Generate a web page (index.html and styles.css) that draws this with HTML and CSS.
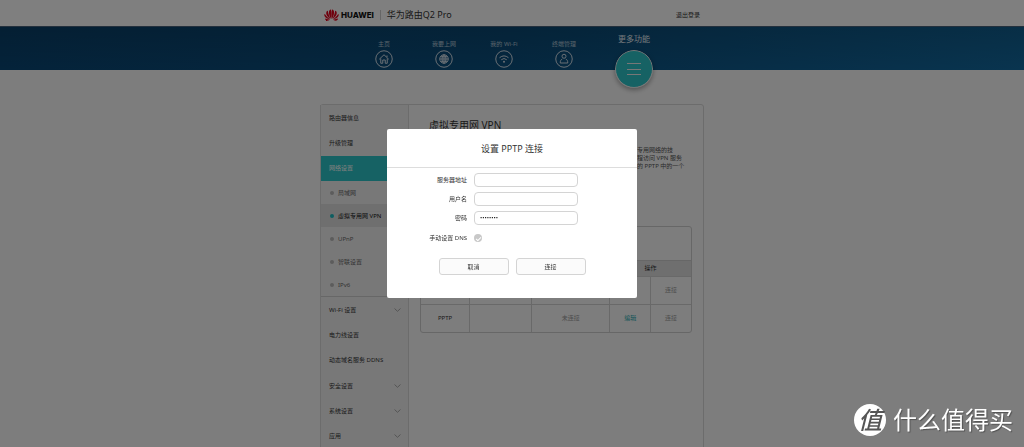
FILE: index.html
```html
<!DOCTYPE html>
<html lang="zh-CN">
<head>
<meta charset="utf-8">
<title>华为路由Q2 Pro</title>
<link rel="stylesheet" href="styles.css">
</head>
<body>
<header class="topbar">
  <div class="wrap topbar-row">
    <svg class="logo" viewBox="0 0 30 24" aria-hidden="true">
      <g fill="#e0001b">
        <path d="M14.4 20C10 14 8.500 5 11.500 2C12.500 1 13.700 .7 14 1.200C15.500 7 15 14 14.400 20Z"/>
        <path d="M15.600 20C20 14 21.500 5 18.500 2C17.500 1 16.300 .7 16 1.200C14.500 7 15 14 15.600 20Z"/>
        <path d="M13 20C5 15 3.500 9 5 5.500C5.500 4 7 3 7.600 3.500C8.500 9 10.500 15 13 20Z"/>
        <path d="M17 20C25 15 26.500 9 25 5.500C24.500 4 23 3 22.400 3.500C21.500 9 19.500 15 17 20Z"/>
        <path d="M12.300 20.700C5 19.500 1 16 .6 12.500C.5 11 1 9.800 1.600 9.800C4.500 14 8 17.500 12.300 20.700Z"/>
        <path d="M17.700 20.700C25 19.500 29 16 29.400 12.500C29.500 11 29 9.800 28.400 9.800C25.500 14 22 17.500 17.700 20.700Z"/>
        <path d="M12.300 21.700C9 24 4.500 24 2.500 21C2 20 2.300 19.200 3 19.200C6 20.500 9 21.500 12.300 21.700Z"/>
        <path d="M17.700 21.700C21 24 25.500 24 27.500 21C28 20 27.700 19.200 27 19.200C24 20.500 21 21.500 17.700 21.700Z"/>
      </g>
    </svg>
    <span class="brand">HUAWEI</span>
    <span class="product">华为路由Q2 Pro</span>
    <a class="logout" href="#">退出登录</a>
  </div>
</header>
<nav class="mainnav">
  <div class="wrap mainnav-row">
    <a class="nav-item" href="#"><span>主页</span>
      <svg class="nav-icon" viewBox="0 0 36 36"><circle cx="18" cy="18" r="16.500"/><path d="M8.500 18.500L18 9.500L27.500 18.500M11.500 17V26.500H15.500V20H20.500V26.500H24.500V17M24 11V14"/></svg></a>
    <a class="nav-item" href="#"><span>我要上网</span>
      <svg class="nav-icon" viewBox="0 0 36 36"><circle cx="18" cy="18" r="16.500"/><circle cx="18" cy="18" r="8.500"/><ellipse cx="18" cy="18" rx="4" ry="8.500"/><path d="M9.500 18H26.500M11 13.500H25M11 22.500H25M18 9.500V26.500"/></svg></a>
    <a class="nav-item" href="#"><span>我的 Wi-Fi</span>
      <svg class="nav-icon" viewBox="0 0 36 36"><circle cx="18" cy="18" r="16.500"/><path d="M9 15.500Q18 8 27 15.500M12.500 19.500Q18 14.500 23.500 19.500"/><circle class="dot" cx="18" cy="23.500" r="2"/></svg></a>
    <a class="nav-item" href="#"><span>终端管理</span>
      <svg class="nav-icon" viewBox="0 0 36 36"><circle cx="18" cy="18" r="16.500"/><circle cx="18" cy="12.500" r="4"/><path d="M14.500 18C11 20 10.500 22 10.500 26H25.500C25.500 22 25 20 21.500 18"/></svg></a>
    <a class="nav-item nav-current" href="#"><span>更多功能</span>
      <svg class="more-icon" viewBox="0 0 38 38"><circle cx="19" cy="19" r="18.500"/><path d="M12 13.500H26M12 19.500H26M12 24.500H26"/></svg></a>
  </div>
</nav>
<main class="wrap panel">
  <aside class="side">
    <div class="group group-top">
      <a class="side-item" href="#">路由器信息</a>
      <a class="side-item" href="#">升级管理</a>
      <a class="side-item side-active" href="#">网络设置</a>
    </div>
    <div class="submenu">
      <a class="sub-item" href="#">局域网</a>
      <a class="sub-item sub-active" href="#">虚拟专用网 VPN</a>
      <a class="sub-item" href="#">UPnP</a>
      <a class="sub-item" href="#">智联设置</a>
      <a class="sub-item" href="#">IPv6</a>
    </div>
    <div class="group group-bottom">
      <a class="side-item" href="#">Wi-Fi 设置<svg class="chev" viewBox="0 0 7 4"><path d="M.5 .5L3.500 3.300L6.500 .5"/></svg></a>
      <a class="side-item" href="#">电力线设置</a>
      <a class="side-item" href="#">动态域名服务 DDNS</a>
      <a class="side-item" href="#">安全设置<svg class="chev" viewBox="0 0 7 4"><path d="M.5 .5L3.500 3.300L6.500 .5"/></svg></a>
      <a class="side-item" href="#">系统设置<svg class="chev" viewBox="0 0 7 4"><path d="M.5 .5L3.500 3.300L6.500 .5"/></svg></a>
      <a class="side-item" href="#">应用<svg class="chev" viewBox="0 0 7 4"><path d="M.5 .5L3.500 3.300L6.500 .5"/></svg></a>
    </div>
  </aside>
  <section class="content">
    <h1 class="page-title">虚拟专用网 VPN</h1>
    <p class="intro">专用网络的技<br>程访问 VPN 服务<br>的 PPTP 中的一个</p>
    <div class="table-box">
      <div class="table-top"></div>
      <table class="vpn-table">
        <colgroup><col class="c-type"><col class="c-server"><col class="c-state"><col class="c-act"><col class="c-act"></colgroup>
        <thead><tr><th></th><th></th><th></th><th colspan="2">操作</th></tr></thead>
        <tbody>
          <tr><td></td><td></td><td></td><td></td><td>连接</td></tr>
          <tr><td class="type">PPTP</td><td></td><td>未连接</td><td><a class="edit" href="#">编辑</a></td><td>连接</td></tr>
        </tbody>
      </table>
    </div>
  </section>
</main>
<div class="overlay">
  <form class="dialog" role="dialog" aria-labelledby="dlg-title">
    <h2 class="dialog-title" id="dlg-title">设置 PPTP 连接</h2>
    <div class="fields">
      <label for="server">服务器地址</label><input class="field" id="server" type="text">
      <label for="user">用户名</label><input class="field" id="user" type="text">
      <label for="pass">密码</label><input class="field" id="pass" type="password" value="12345678">
      <label for="dns">手动设置 DNS</label><input class="check" id="dns" type="checkbox">
    </div>
    <div class="actions">
      <button class="btn" type="button">取消</button>
      <button class="btn" type="button">连接</button>
    </div>
  </form>
</div>
<div class="watermark"><span class="mark">值</span><span>什么值得买</span></div>
</body>
</html>
```

FILE: styles.css
```css
* { box-sizing: border-box; }
body {
  margin: 0;
  height: 100vh;
  overflow: hidden;
  background: #fbfbfb;
  color: #333;
  font: 6px/8px "Noto Sans", "Noto Sans CJK SC", sans-serif;
}
a { color: inherit; text-decoration: none; }
.wrap { width: 100%; max-width: 384px; margin: 0 auto; }

.topbar { background: #fff; }
.topbar-row { display: flex; align-items: center; height: 26px; padding: 4px 4px 0; }
.logo { width: 15px; height: 12px; margin-right: 2px; }
.brand { font-family: Inter, sans-serif; font-size: 8px; font-weight: 800; line-height: 10px; color: #111; }
.product {
  margin-left: 6px;
  padding-left: 6px;
  border-left: 1px solid #ccc;
  font-size: 9px;
  line-height: 10px;
}
.logout { margin-left: auto; }

.mainnav {
  height: 44px;
  border-top: 1px solid #47617a;
  background: linear-gradient(rgba(0, 0, 0, .12), transparent), linear-gradient(90deg, #094674, #0b5080 50%, #12699f);
}
.mainnav-row { display: flex; align-items: flex-start; padding-left: 34px; }
.nav-item {
  display: flex;
  flex-direction: column;
  align-items: center;
  gap: 2px;
  width: 60px;
  padding-top: 13px;
  color: #b0c4d4;
}
.nav-icon { width: 18px; height: 18px; fill: none; stroke: #d2dee8; stroke-width: 2; }
.nav-icon .dot { fill: #d2dee8; stroke: none; }
.nav-current { width: 80px; gap: 7px; padding-top: 8px; color: #e4edf4; font-size: 8px; }
.more-icon {
  width: 38px;
  height: 38px;
  border-radius: 50%;
  fill: #2cc5c8;
  stroke: #eee;
  stroke-width: 1;
  box-shadow: 0 2px 5px rgba(0, 0, 0, .35);
}

.panel {
  display: flex;
  margin-top: 34px;
  border: 1px solid #d8d8d8;
  border-radius: 3px 3px 0 0;
}
.side { flex: 0 0 89px; margin-left: -1px; border: 1px solid #d8d8d8; border-width: 0 1px; background: #f1f1f1; }
.group { display: flex; flex-direction: column; }
.group-top { height: 76px; }
.group-bottom { height: 153px; border-top: 1px solid #cfcfcf; }
.side-item { flex: 1; display: flex; align-items: center; justify-content: space-between; padding: 0 7px 0 8px; }
.side-active { background: #2cc5c8; color: #fff; }
.chev { width: 7px; height: 4px; fill: none; stroke: #aaa; stroke-width: 1; }
.sub-item { display: flex; align-items: center; gap: 4px; height: 23px; padding-left: 9px; color: #666; white-space: nowrap; }
.sub-item::before { content: ""; width: 4px; height: 4px; border-radius: 50%; background: #b8b8b8; }
.sub-active { background: #dedede; color: #111; }
.sub-active::before { background: #1bbcc2; }

.content { flex: 1; padding: 14px 11px 0; }
.page-title { margin: 0 0 15px 9px; font-size: 10px; line-height: 12px; font-weight: normal; }
.intro { margin: 0 0 56px 217px; white-space: nowrap; color: #555; }
.table-box { border: 1px solid #cecece; border-radius: 3px; }
.table-top { height: 34px; border-bottom: 1px solid #cecece; }
.vpn-table { width: 100%; border-collapse: collapse; table-layout: fixed; text-align: center; color: #999; }
.c-type { width: 18%; }
.c-server { width: 23%; }
.c-state { width: 29%; }
.c-act { width: 15%; }
.vpn-table th { height: 15px; padding: 0; background: #dedede; color: #333; font-weight: normal; }
.vpn-table td { height: 28px; padding: 0; border: 1px solid #d2d2d2; }
.vpn-table td:first-child { border-left: 0; }
.vpn-table td:last-child { border-right: 0; }
.vpn-table tr:last-child td { border-bottom: 0; }
.vpn-table .type { color: #333; }
.edit { color: #1ba9ae; }

.overlay { position: fixed; inset: 0; padding-top: 129px; background: rgba(0, 0, 0, .5); }
.dialog { width: 250px; margin: 0 auto; padding-bottom: 23px; border-radius: 2px; background: #fff; }
.dialog-title {
  margin: 0;
  padding: 14px 0 13px;
  border-bottom: 1px solid #ddd;
  font-size: 9px;
  line-height: 11px;
  font-weight: normal;
  text-align: center;
}
.fields { display: grid; grid-template-columns: 80px 104px; gap: 5px 7px; align-items: center; padding-top: 5px; }
.fields label { text-align: right; }
.field {
  width: 100%;
  height: 14px;
  padding: 0 5px;
  border: 1px solid #d4d4d4;
  border-radius: 4px;
  background: #fff;
  color: #222;
  font: inherit;
}
.check {
  appearance: none;
  display: grid;
  place-items: center;
  width: 8px;
  height: 8px;
  margin: 4px 0;
  border-radius: 50%;
  background: #c8c8c8;
}
.check::after { content: ""; width: 4px; height: 2px; border: solid #fff; border-width: 0 0 1px 1px; transform: rotate(-45deg); }
.actions { display: flex; justify-content: center; gap: 7px; padding-top: 12px; }
.btn {
  width: 70px;
  height: 17px;
  padding: 0;
  border: 1px solid #d4d4d4;
  border-radius: 3px;
  background: #fbfbfb;
  color: #333;
  font: inherit;
}

.watermark {
  position: fixed;
  right: 11px;
  bottom: 11px;
  display: flex;
  align-items: center;
  gap: 7px;
  color: #fff;
  font-size: 24px;
  line-height: 32px;
  text-shadow: 1px 1px 1px rgba(0, 0, 0, .35);
}
.mark {
  width: 32px;
  height: 32px;
  border-radius: 50%;
  background: #fff;
  color: #555;
  font-weight: 500;
  font-style: italic;
  text-align: center;
  text-shadow: none;
}
```
